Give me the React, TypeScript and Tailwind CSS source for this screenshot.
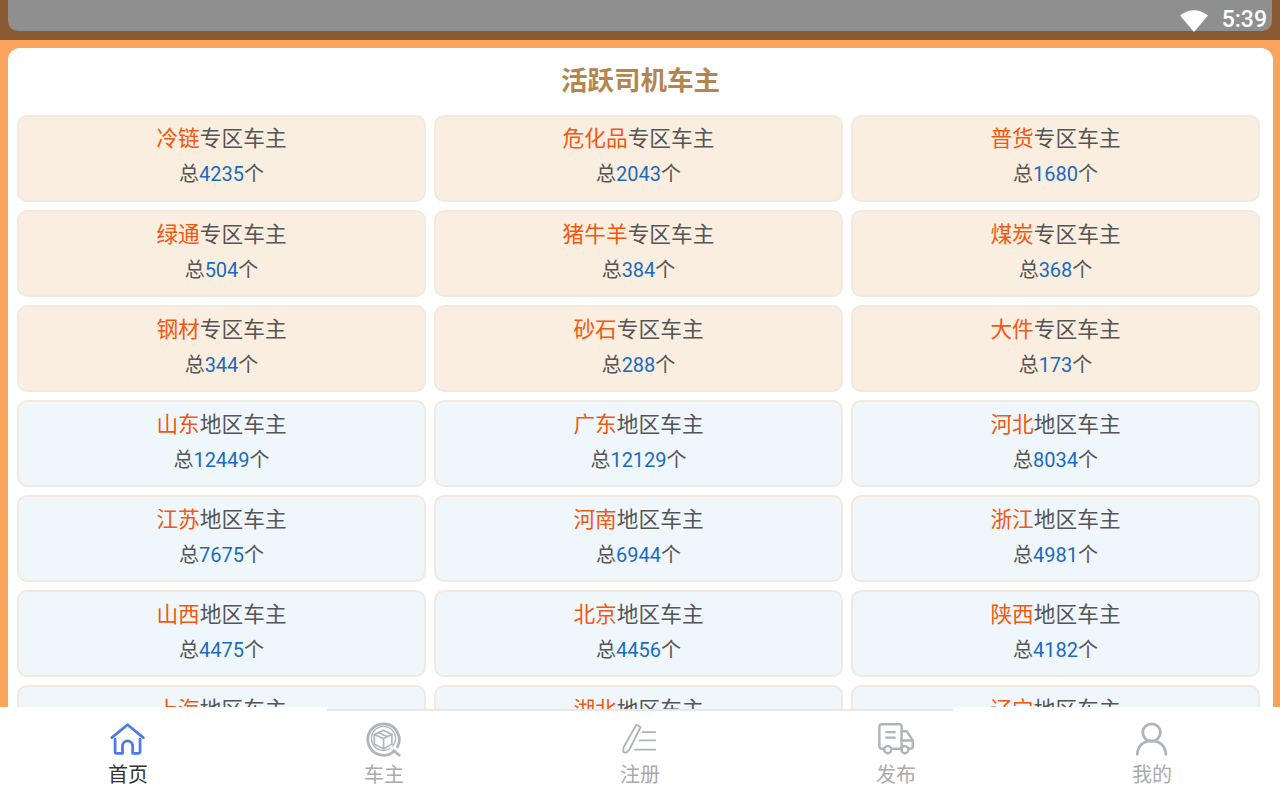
const cjk = '[font-family:Roboto,"Noto_Sans_CJK_SC",sans-serif]';

const zones = [
  { name: '冷链', count: 4235 },
  { name: '危化品', count: 2043 },
  { name: '普货', count: 1680 },
  { name: '绿通', count: 504 },
  { name: '猪牛羊', count: 384 },
  { name: '煤炭', count: 368 },
  { name: '钢材', count: 344 },
  { name: '砂石', count: 288 },
  { name: '大件', count: 173 },
];

const regions = [
  { name: '山东', count: 12449 },
  { name: '广东', count: 12129 },
  { name: '河北', count: 8034 },
  { name: '江苏', count: 7675 },
  { name: '河南', count: 6944 },
  { name: '浙江', count: 4981 },
  { name: '山西', count: 4475 },
  { name: '北京', count: 4456 },
  { name: '陕西', count: 4182 },
  { name: '上海', count: 4100 },
  { name: '湖北', count: 4050 },
  { name: '辽宁', count: 4000 },
];

function DriverCard({ name, count, label, blue }: { name: string; count: number; label: string; blue?: boolean }) {
  return (
    <div
      className={`h-[87px] rounded-[10px] border-2 border-[#f2eade] pt-[4.750px] text-center text-[#555555] ${
        blue ? 'bg-[#eff7fd]' : 'bg-[#faeee0]'
      }`}
    >
      <div className="h-[36px] text-[21.700px] leading-[35px]">
        <span className="text-[#f4570e]">{name}</span>
        {label}车主
      </div>
      <div className="h-[35px] text-[20px] leading-[35px]">
        总<span className="text-[#1a6bbf]">{count}</span>个
      </div>
    </div>
  );
}

function HomeIcon() {
  return (
    <svg width="37" height="37" viewBox="1 0 40 40" fill="none" stroke="#4a7bea" strokeWidth="3" strokeLinecap="round" strokeLinejoin="round">
      <path d="M3 18 L20 4 L37 18" />
      <path d="M6.500 20 V33 a2 2 0 0 0 2 2 H14.500 V27 a5.500 5.500 0 0 1 11 0 V35 H31.500 a2 2 0 0 0 2 -2 V20" />
    </svg>
  );
}

function CarOwnerIcon() {
  return (
    <svg width="37" height="37" viewBox="1 0 40 40" fill="none" stroke="#b0b3bb" strokeLinecap="round" strokeLinejoin="round">
      <path d="M31 33 A17 17 0 1 1 35 28" strokeWidth="3" />
      <path d="M31 32 L37 37" strokeWidth="3" />
      <path d="M26.500 30 A13 13 0 1 1 30 27" strokeWidth="1.500" />
      <path d="M10 14.500 L20 10 L29 14.500 V25 L20 30 L10 25 Z" strokeWidth="1.800" />
      <path d="M10 14.500 L20 19 L29 14.500 M20 19 V30 M14.500 12.500 L24 17" strokeWidth="1.800" />
    </svg>
  );
}

function RegisterIcon() {
  return (
    <svg width="37" height="37" viewBox="1 0 40 40" fill="none" stroke="#b0b3bb" strokeWidth="2" strokeLinecap="round" strokeLinejoin="round">
      <path d="M16.500 4 L21 6.500 L9 31 Q6 35 3 34 Q1.500 31 3.500 27 Z" />
      <path d="M23 12 H37 M20 21 H37 M15 31 H37" />
    </svg>
  );
}

function TruckIcon() {
  return (
    <svg width="37" height="37" viewBox="0 0 40 40" fill="none" stroke="#b0b3bb" strokeWidth="2.600" strokeLinecap="round" strokeLinejoin="round">
      <path d="M6 30 H4 a2.500 2.500 0 0 1 -2.500 -2.500 V6 a2.500 2.500 0 0 1 2.500 -2.500 H23 a2.500 2.500 0 0 1 2.500 2.500 V30 H15" />
      <path d="M25.500 11 H31 L37.500 21 V27.500 a2.500 2.500 0 0 1 -2.500 2.500 H33 M25.500 30 H24" />
      <path d="M25.500 21 H37" />
      <circle cx="10.500" cy="31" r="3.800" />
      <circle cx="29" cy="31" r="3.800" />
      <path d="M9 12 H18 M9 18 H18" />
    </svg>
  );
}

function UserIcon() {
  return (
    <svg width="37" height="37" viewBox="1 0 40 40" fill="none" stroke="#b0b3bb" strokeWidth="3" strokeLinecap="round">
      <circle cx="20" cy="12.500" r="9.500" />
      <path d="M4.500 36 C5 27 11 21.500 20 21.500 C29 21.500 35 27 35.500 36" />
    </svg>
  );
}

const navItems = [
  { label: '首页', icon: <HomeIcon />, active: true },
  { label: '车主', icon: <CarOwnerIcon /> },
  { label: '注册', icon: <RegisterIcon /> },
  { label: '发布', icon: <TruckIcon /> },
  { label: '我的', icon: <UserIcon /> },
];

export default function App() {
  return (
    <div className={`flex h-[800px] w-[1280px] flex-col overflow-hidden bg-[#f9a45d] ${cjk}`}>
      {/* status bar */}
      <div className="h-10 shrink-0 bg-[#8a5a33] px-2">
        <div className="flex h-[31px] items-center justify-end rounded-b-[10px] bg-[#8f8f8f] pr-[5px]">
          <svg width="30" height="23" viewBox="0 0 30 23" className="mt-[9px]">
            <path d="M15 23 L1 6.500 Q15 -4 29 6.500 Z" fill="#ffffff" />
          </svg>
          <span className="ml-[13px] mt-[8px] text-[23px] font-medium leading-none text-white">5:39</span>
        </div>
      </div>

      <div className="-mb-[2px] min-h-0 flex-1 pl-2 pr-[7px] pt-2">
        <div className="h-full overflow-hidden rounded-t-[12px] bg-white">
          <h1 className="h-[66.700px] pt-[13px] text-center text-[26.500px] font-bold leading-[40px] text-[#b5854f]">活跃司机车主</h1>
          <div className="grid grid-cols-3 gap-x-2 gap-y-[8.100px] pl-[9px] pr-[13px]">
            {zones.map(z => <DriverCard key={z.name} name={z.name} count={z.count} label="专区" />)}
            {regions.map(r => <DriverCard key={r.name} name={r.name} count={r.count} label="地区" blue />)}
          </div>
        </div>
      </div>

      {/* bottom nav */}
      <div className="relative z-10 h-[93px] shrink-0">
        <div className="flex h-[2px]">
          <div className="w-[327px] bg-white" />
          <div className="flex-1" />
          <div className="w-[327px] bg-white" />
        </div>
        <div className="h-[91px] bg-white">
          <div className="mx-auto h-[2px] w-[626px] bg-[#e8e8e8]" />
          <div className="grid grid-cols-5">
            {navItems.map(item => (
              <div key={item.label} className="flex flex-col items-center pt-[10px]">
                {item.icon}
                <span className={`mt-[2px] text-[20px] leading-[30px] ${item.active ? 'text-[#333333]' : 'text-[#aaaaaa]'}`}>{item.label}</span>
              </div>
            ))}
          </div>
        </div>
      </div>
    </div>
  );
}
